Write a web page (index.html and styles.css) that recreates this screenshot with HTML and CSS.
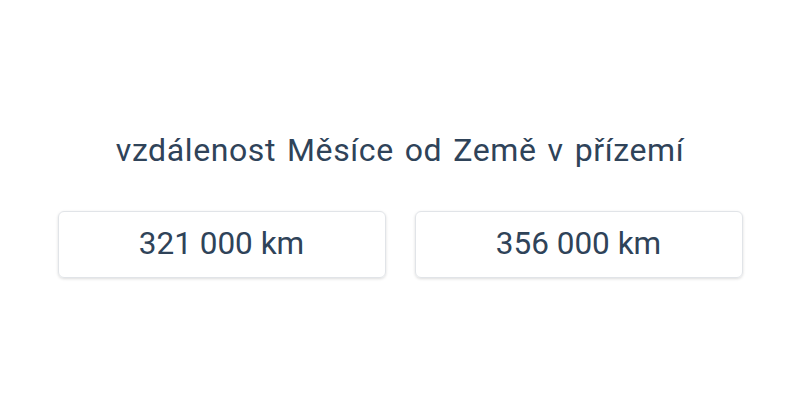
FILE: index.html
```html
<!DOCTYPE html>
<html lang="cs">
<head>
<meta charset="utf-8">
<link rel="stylesheet" href="styles.css">
</head>
<body>
<main class="quiz">
  <h1 class="question">vzdálenost Měsíce od Země v přízemí</h1>
  <div class="options">
    <div class="option">321 000 km</div>
    <div class="option">356 000 km</div>
  </div>
</main>
</body>
</html>
```
FILE: styles.css
```css
html, body {
  margin: 0;
  padding: 0;
  background: #ffffff;
}
body {
  width: 800px;
  height: 400px;
  font-family: Roboto, "Noto Sans", sans-serif;
  color: #2f4359;
}
.quiz {
  display: flex;
  flex-direction: column;
  align-items: center;
  padding-top: 130px;
}
.question {
  margin: 0;
  font-size: 32px;
  font-weight: 400;
  line-height: 40px;
  letter-spacing: 0.6px;
  word-spacing: 2.5px;
}
.options {
  display: flex;
  gap: 29px;
  margin-top: 41px;
}
.option {
  box-sizing: border-box;
  width: 328px;
  height: 67px;
  padding-bottom: 2px;
  display: flex;
  align-items: center;
  justify-content: center;
  border: 1px solid #e1e4e8;
  border-radius: 6px;
  box-shadow: 0 1px 3px rgba(0,0,0,0.14);
  font-size: 31.5px;
  line-height: 36px;
}
```
